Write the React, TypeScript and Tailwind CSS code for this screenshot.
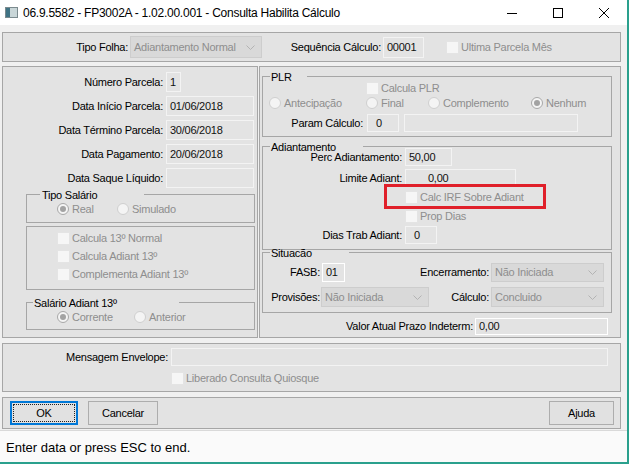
import React from "react";

const dim = "text-[#8e8e8e]";

function Radio({ checked = false }: { checked?: boolean }) {
  return (
    <span
      className={`w-[12px] h-[12px] rounded-full border ${
        checked ? "border-[#a8a8a8]" : "border-[#cfcfcf]"
      } bg-[#f4f4f4] flex items-center justify-center shrink-0`}
    >
      {checked && <span className="w-[6px] h-[6px] rounded-full bg-[#a3a3a3]" />}
    </span>
  );
}

function Check() {
  return <span className="w-[13px] h-[13px] bg-[#f6f6f6] border border-[#e4e4e4] shrink-0" />;
}

function Field({ className, value, white }: { className: string; value?: string; white?: boolean }) {
  return (
    <div
      className={`${className} ${
        white ? "border-white" : "border-[#f3f3f3]"
      } border bg-[#e3e3e3] flex items-center px-[3px] text-[#111] whitespace-nowrap shrink-0`}
    >
      {value}
    </div>
  );
}

function Chevron() {
  return (
    <svg width="9" height="5" viewBox="0 0 9 5" className="shrink-0">
      <polyline points="0.5,0.5 4.5,4.5 8.5,0.5" fill="none" stroke="#b3b3b3" strokeWidth="1" />
    </svg>
  );
}

function Select({ className, value }: { className: string; value: string }) {
  return (
    <div
      className={`${className} border border-[#cdcdcd] bg-[#d9d9d9] flex items-center pl-[3px] pr-[6px] ${dim} shrink-0`}
    >
      <span className="flex-1 whitespace-nowrap">{value}</span>
      <Chevron />
    </div>
  );
}

function Group({
  title,
  legendClass,
  className,
  children,
}: {
  title: string;
  legendClass: string;
  className: string;
  children: React.ReactNode;
}) {
  return (
    <fieldset className={`border border-[#a6a6a6] shrink-0 ${className}`}>
      <legend className={`pt-[3px] leading-[13px] whitespace-nowrap ${legendClass}`}>{title}</legend>
      {children}
    </fieldset>
  );
}

function Opt({ label, checked, className }: { label: string; checked?: boolean; className: string }) {
  return (
    <div className={`flex items-center gap-[3px] shrink-0 ${className}`}>
      <Radio checked={checked} />
      <span className={dim}>{label}</span>
    </div>
  );
}

function Box({ label, className }: { label: string; className: string }) {
  return (
    <div className={`flex items-center gap-[2px] ${className}`}>
      <Check />
      <span className={dim}>{label}</span>
    </div>
  );
}

function Row({ label, children }: { label: string; children: React.ReactNode }) {
  return (
    <div className="flex items-center h-[20px] mb-[4px]">
      <span className="w-[160px] text-right shrink-0">{label}</span>
      <div className="ml-[3px]">{children}</div>
    </div>
  );
}

export default function App() {
  return (
    <div className="w-[630px] h-[465px] bg-white">
      <div className="w-[629px] h-[464px] border-r-2 border-b-2 border-[#2aa08d] bg-[#f0f0f0] flex flex-col font-['Liberation_Sans',Arial,sans-serif] text-[11px] tracking-[-0.25px] text-black">
        {/* title bar */}
        <div className="h-[25px] bg-white flex items-center shrink-0">
          <svg width="13" height="11" viewBox="0 0 13 11" className="ml-[5px]">
            <rect x="0.5" y="0.5" width="12" height="10" fill="#dfe6e7" stroke="#7b8a8e" />
            <rect x="1" y="1" width="4" height="9" fill="#3f7384" />
            <rect x="5" y="1" width="7" height="9" fill="#c9d6d8" />
          </svg>
          <span className="ml-[5px] text-[12px] tracking-[-0.25px]">06.9.5582 - FP3002A - 1.02.00.001 - Consulta Habilita Cálculo</span>
          <div className="ml-auto flex h-full">
            <div className="w-[46px] flex items-center justify-center">
              <svg width="10" height="10" viewBox="0 0 10 10">
                <line x1="0" y1="5.5" x2="10" y2="5.5" stroke="#000" />
              </svg>
            </div>
            <div className="w-[46px] flex items-center justify-center">
              <svg width="10" height="10" viewBox="0 0 10 10">
                <rect x="0.5" y="0.5" width="9" height="9" fill="none" stroke="#000" />
              </svg>
            </div>
            <div className="w-[46px] flex items-center justify-center">
              <svg width="10" height="10" viewBox="0 0 10 10">
                <path d="M0 0 L10 10 M10 0 L0 10" stroke="#000" strokeWidth="1" />
              </svg>
            </div>
          </div>
        </div>

        <div className="flex flex-col pl-[2px] pt-[7px] flex-1">
          {/* top panel */}
          <div className="w-[619px] h-[30px] border border-[#a6a6a6] bg-[#e3e3e3] flex items-center shrink-0">
            <span className="w-[125px] text-right">Tipo Folha:</span>
            <Select className="ml-[2px] w-[132px] h-[22px]" value="Adiantamento Normal" />
            <span className="w-[119px] text-right">Sequência Cálculo:</span>
            <Field className="ml-[2px] w-[41px] h-[21px]" value="00001" />
            <div className="ml-[22px]">
              <Box label="Ultima Parcela Mês" className="" />
            </div>
          </div>

          {/* main area */}
          <div className="mt-[4px] h-[272px] flex gap-[1px] shrink-0">
            {/* left */}
            <div className="w-[256px] h-full border border-[#a6a6a6] bg-[#e3e3e3] pt-[5px] flex flex-col">
              <Row label="Número Parcela:">
                <Field className="w-[15px] h-[20px]" value="1" />
              </Row>
              <Row label="Data Início Parcela:">
                <Field className="w-[88px] h-[20px]" value="01/06/2018" />
              </Row>
              <Row label="Data Término Parcela:">
                <Field className="w-[88px] h-[20px]" value="30/06/2018" />
              </Row>
              <Row label="Data Pagamento:">
                <Field className="w-[88px] h-[20px]" value="20/06/2018" />
              </Row>
              <Row label="Data Saque Líquido:">
                <Field className="w-[88px] h-[20px]" />
              </Row>

              <Group title="Tipo Salário" legendClass="ml-[13px] pl-[2px] w-[104px]" className="-mt-[6px] ml-[23px] w-[229px] h-[37px]">
                <div className="flex items-center h-[14px] pl-[30px]">
                  <Opt label="Real" checked className="w-[60px]" />
                  <Opt label="Simulado" className="" />
                </div>
              </Group>

              <div className="mt-[3px] ml-[23px] w-[229px] h-[64px] border border-[#a6a6a6] pt-[4px] pl-[30px] flex flex-col gap-[4px] shrink-0">
                <Box label="Calcula 13º Normal" className="h-[14px]" />
                <Box label="Calcula Adiant 13º" className="h-[14px]" />
                <Box label="Complementa Adiant 13º" className="h-[14px]" />
              </div>

              <Group title="Salário Adiant 13º" legendClass="ml-[6px] pl-[1px] w-[146px]" className="mt-[4px] ml-[23px] w-[229px] h-[36px]">
                <div className="flex items-center h-[14px] pl-[30px]">
                  <Opt label="Corrente" checked className="w-[77px]" />
                  <Opt label="Anterior" className="" />
                </div>
              </Group>
            </div>

            {/* right */}
            <div className="w-[362px] h-full border border-[#a6a6a6] bg-[#e3e3e3] flex flex-col">
              <Group title="PLR" legendClass="ml-[7px] pl-[1px] w-[37px]" className="mt-[1px] ml-[2px] w-[350px] h-[69px]">
                <div className="flex flex-col">
                  <div className="-mt-[2px] h-[12px] flex items-center pl-[103px]">
                    <Box label="Calcula PLR" className="" />
                  </div>
                  <div className="mt-[2px] h-[14px] flex items-center pl-[6px]">
                    <Opt label="Antecipação" className="w-[97px]" />
                    <Opt label="Final" className="w-[62px]" />
                    <Opt label="Complemento" className="w-[103px]" />
                    <Opt label="Nenhum" checked className="" />
                  </div>
                  <div className="mt-[4px] h-[18px] flex items-center">
                    <span className="w-[100px] text-right">Param Cálculo:</span>
                    <Field className="ml-[4px] w-[32px] h-[18px] pl-[8px]" value="0" />
                    <Field className="ml-[5px] w-[174px] h-[18px]" />
                  </div>
                </div>
              </Group>

              <Group title="Adiantamento" legendClass="ml-[7px] pl-[1px] w-[93px]" className="mt-[1px] ml-[2px] w-[350px] h-[112px]">
                <div className="flex flex-col">
                  <div className="-mt-[6px] h-[18px] flex items-center">
                    <span className="w-[139px] text-right">Perc Adiantamento:</span>
                    <Field className="ml-[3px] w-[47px] h-[18px]" value="50,00" />
                  </div>
                  <div className="mt-[3px] h-[18px] flex items-center">
                    <span className="w-[139px] text-right">Limite Adiant:</span>
                    <Field className="ml-[3px] w-[111px] h-[18px] pl-[22px]" value="0,00" />
                  </div>
                  <div className="relative mt-[4px] h-[13px] flex items-center pl-[142px]">
                    <div className="absolute left-[121px] -top-[7px] w-[162px] h-[25px] border-[3px] border-[#e0202a]" />
                    <Box label="Calc IRF Sobre Adiant" className="" />
                  </div>
                  <div className="mt-[6px] h-[13px] flex items-center pl-[142px]">
                    <Box label="Prop Dias" className="" />
                  </div>
                  <div className="mt-[3px] h-[18px] flex items-center">
                    <span className="w-[139px] text-right">Dias Trab Adiant:</span>
                    <Field className="ml-[3px] w-[32px] h-[18px] pl-[8px]" value="0" />
                  </div>
                </div>
              </Group>

              <Group title="Situacão" legendClass="ml-[7px] pl-[1px] w-[79px]" className="-mt-[6px] ml-[2px] w-[350px] h-[69px]">
                <div className="flex flex-col">
                  <div className="mt-[2px] h-[20px] flex items-center">
                    <span className="w-[57px] text-right">FASB:</span>
                    <Field white className="ml-[2px] w-[23px] h-[19px]" value="01" />
                    <span className="w-[144px] text-right">Encerramento:</span>
                    <Select className="ml-[2px] w-[113px] h-[19px]" value="Não Iniciada" />
                  </div>
                  <div className="mt-[5px] h-[20px] flex items-center">
                    <span className="w-[57px] text-right">Provisões:</span>
                    <Select className="ml-[1px] w-[108px] h-[20px]" value="Não Iniciada" />
                    <span className="w-[60px] text-right">Cálculo:</span>
                    <Select className="ml-[2px] w-[113px] h-[20px]" value="Concluido" />
                  </div>
                </div>
              </Group>

              <div className="mt-[5px] h-[17px] flex items-center">
                <span className="w-[213px] text-right">Valor Atual Prazo Indeterm:</span>
                <Field white className="ml-[2px] w-[133px] h-[17px]" value="0,00" />
              </div>
            </div>
          </div>

          {/* mensagem */}
          <div className="mt-[5px] w-[619px] h-[49px] border border-[#a6a6a6] bg-[#e3e3e3] pt-[4px] flex flex-col shrink-0">
            <div className="h-[18px] flex items-center">
              <span className="w-[165px] text-right">Mensagem Envelope:</span>
              <Field className="ml-[3px] w-[437px] h-[18px]" />
            </div>
            <div className="mt-[6px] h-[13px] flex items-center pl-[168px]">
              <Box label="Liberado Consulta Quiosque" className="" />
            </div>
          </div>

          {/* buttons */}
          <div className="mt-[5px] w-[619px] h-[32px] border border-[#a6a6a6] bg-[#e3e3e3] flex items-center shrink-0">
            <button className="ml-[7px] w-[68px] h-[24px] border-2 border-[#0078d7] bg-[#e1e1e1] flex items-center justify-center p-[1px]">
              <span className="w-full h-full border border-dotted border-[#222] flex items-center justify-center">OK</span>
            </button>
            <button className="ml-[10px] w-[70px] h-[24px] border border-[#adadad] bg-[#e1e1e1]">Cancelar</button>
            <button className="ml-auto mr-[6px] w-[65px] h-[24px] border border-[#adadad] bg-[#e1e1e1]">Ajuda</button>
          </div>

          {/* status */}
          <div className="mt-[1px] -ml-[2px] flex-1 border-t border-[#d9d9d9] bg-[#fafafa] flex items-center pl-[6px] pt-[3px] text-[13px] tracking-normal">
            Enter data or press ESC to end.
          </div>
        </div>
      </div>
    </div>
  );
}
